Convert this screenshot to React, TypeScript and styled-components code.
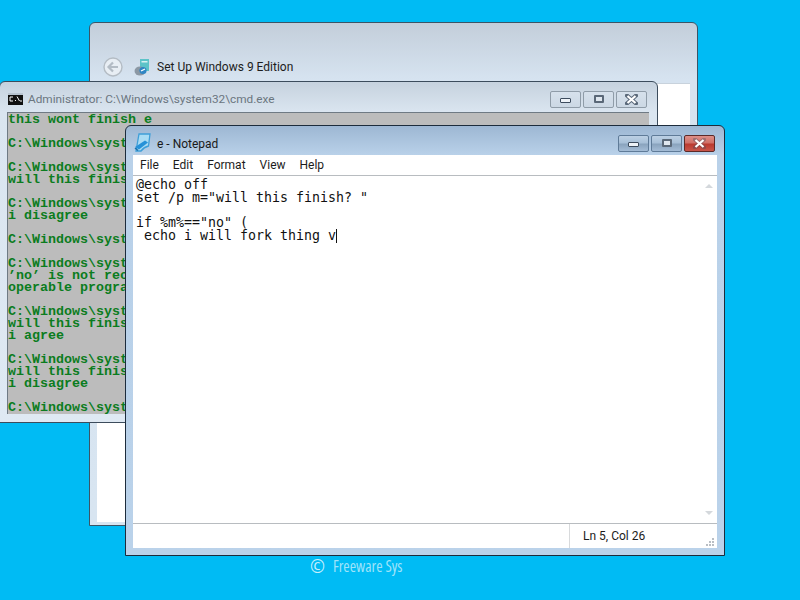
import styled, { createGlobalStyle } from "styled-components";

const GlobalStyle = createGlobalStyle`
  html, body {
    margin: 0;
    padding: 0;
    background: #00bbf4;
  }
  * {
    box-sizing: border-box;
  }
`;

const consoleText = [
  "this wont finish e",
  "",
  "C:\\Windows\\system32>e",
  "",
  "C:\\Windows\\system32>e",
  "will this finish? i",
  "",
  "C:\\Windows\\system32>",
  "i disagree",
  "",
  "C:\\Windows\\system32>",
  "",
  "C:\\Windows\\system32>no",
  "’no’ is not recognized",
  "operable program or",
  "",
  "C:\\Windows\\system32>e",
  "will this finish? i",
  "i agree",
  "",
  "C:\\Windows\\system32>e",
  "will this finish? i",
  "i disagree",
  "",
  "C:\\Windows\\system32>",
];

function WindowButtons({ active }: { active?: boolean }) {
  return (
    <ButtonGroup>
      <CaptionButton $active={active}>
        <MinGlyph />
      </CaptionButton>
      <CaptionButton $active={active}>
        <MaxGlyph />
      </CaptionButton>
      <CaptionButton $active={active} $close>
        <svg width="13" height="11" viewBox="0 0 13 11">
          <path
            d="M2 1.5 L11 9.5 M11 1.5 L2 9.5"
            stroke="#3d4c5e"
            strokeWidth="4"
            strokeLinecap="square"
            opacity={active ? 0.35 : 0.8}
          />
          <path
            d="M2.5 2 L10.5 9 M10.5 2 L2.5 9"
            stroke="#fff"
            strokeWidth="2.2"
          />
        </svg>
      </CaptionButton>
    </ButtonGroup>
  );
}

function BackIcon() {
  return (
    <svg width="20" height="20" viewBox="0 0 20 20">
      <circle cx="10" cy="10" r="9" fill="#e8eef4" stroke="#b4bcc4" strokeWidth="1.4" />
      <path
        d="M10 5.5 L5.5 10 L10 14.5 M5.5 10 H15"
        fill="none"
        stroke="#b3bcc5"
        strokeWidth="2.2"
      />
    </svg>
  );
}

function SetupIcon() {
  return (
    <svg width="16" height="18" viewBox="0 0 16 18">
      <rect x="6" y="1" width="9" height="12" fill="#5cc3c8" />
      <rect x="7.5" y="3" width="6" height="1.5" fill="#d8f2f2" />
      <ellipse cx="6" cy="13" rx="5.5" ry="4.5" fill="#8c98a4" />
      <circle cx="9" cy="12.5" r="3.6" fill="#2f86c4" />
      <path d="M7 13 L11 11" stroke="#fff" strokeWidth="1.3" />
    </svg>
  );
}

function CmdIcon() {
  return (
    <svg width="15" height="12" viewBox="0 0 15 12">
      <rect width="15" height="12" fill="#111" />
      <rect y="0" width="15" height="2" fill="#b8c4d0" />
      <path d="M2 4 H5 M2 4 V8 M2 8 H5" stroke="#fff" strokeWidth="1" fill="none" />
      <path d="M7 7.5 H8 M9 3.5 L11.5 8 M12 8 H14" stroke="#fff" strokeWidth="1" fill="none" />
    </svg>
  );
}

function NotepadIcon() {
  return (
    <svg width="18" height="20" viewBox="0 0 18 20">
      <path d="M5 1 H16 L14.5 13 Q10 14 7 18 H2 Z" fill="#a9dcf4" stroke="#3f9fd8" strokeWidth="1.3" />
      <path d="M1 14 L11 7.5 L14 9.5 L5 16.5 Z" fill="#2792d8" />
      <path d="M1 15 L4 17.5" stroke="#1b6fa8" strokeWidth="1.4" />
    </svg>
  );
}

export default function App() {
  return (
    <>
      <GlobalStyle />
      <Desktop>
        <SetupWindow>
          <SetupHeader>
            <BackIcon />
            <SetupIconWrap>
              <SetupIcon />
            </SetupIconWrap>
            <SetupTitle>Set Up Windows 9 Edition</SetupTitle>
          </SetupHeader>
          <SetupBody />
        </SetupWindow>

        <CmdWindow>
          <CmdBar>
            <CmdIconWrap>
              <CmdIcon />
            </CmdIconWrap>
            <CmdTitle>Administrator: C:\Windows\system32\cmd.exe</CmdTitle>
            <WindowButtons />
          </CmdBar>
          <ConsoleArea>
            {consoleText.map((line, i) => (
              <ConsoleLine key={i}>{line || " "}</ConsoleLine>
            ))}
          </ConsoleArea>
        </CmdWindow>

        <NotepadWindow>
          <NotepadBar>
            <NotepadIconWrap>
              <NotepadIcon />
            </NotepadIconWrap>
            <NotepadTitle>e - Notepad</NotepadTitle>
            <WindowButtons active />
          </NotepadBar>
          <Client>
            <MenuBar>
              <MenuItem>File</MenuItem>
              <MenuItem>Edit</MenuItem>
              <MenuItem>Format</MenuItem>
              <MenuItem>View</MenuItem>
              <MenuItem>Help</MenuItem>
            </MenuBar>
            <EditorArea>
              <EditorText>
                <EditorLine>@echo off</EditorLine>
                <EditorLine>set /p m="will this finish? "</EditorLine>
                <EditorLine> </EditorLine>
                <EditorLine>if %m%=="no" (</EditorLine>
                <EditorLine>
                  {" echo i will fork thing v"}
                  <Caret />
                </EditorLine>
              </EditorText>
              <Scrollbar>
                <ArrowUp />
                <ArrowDown />
              </Scrollbar>
            </EditorArea>
            <StatusBar>
              <StatusSpacer />
              <StatusCell>Ln 5, Col 26</StatusCell>
              <Grip>
                <svg width="12" height="12" viewBox="0 0 12 12">
                  <path
                    d="M9 2h2v2H9z M6 5h2v2H6z M9 5h2v2H9z M3 8h2v2H3z M6 8h2v2H6z M9 8h2v2H9z"
                    fill="#b9bec4"
                  />
                </svg>
              </Grip>
            </StatusBar>
          </Client>
        </NotepadWindow>

        <Watermark>
          <CopyMark>©</CopyMark>
          <span>Freeware Sys</span>
        </Watermark>
      </Desktop>
    </>
  );
}

const Desktop = styled.div`
  position: relative;
  width: 800px;
  height: 600px;
  overflow: hidden;
  background: #00bbf4;
  font-family: Roboto, "Liberation Sans", sans-serif;
`;

const SetupWindow = styled.div`
  position: absolute;
  left: 89px;
  top: 22px;
  width: 609px;
  height: 504px;
  display: flex;
  flex-direction: column;
  border: 1px solid #3c5566;
  border-radius: 6px 6px 0 0;
  padding: 0 7px 3px 7px;
  background: linear-gradient(#c3ceda 0, #d6e3f0 56px, #d8e5f1 100%);
`;

const SetupHeader = styled.div`
  height: 60px;
  flex: none;
  display: flex;
  align-items: center;
  padding: 35px 0 7px 6px;
`;

const SetupIconWrap = styled.div`
  display: flex;
  margin-left: 11px;
`;

const SetupTitle = styled.div`
  margin-left: 7px;
  font-size: 12px;
  color: #1c1c1c;
  white-space: nowrap;
`;

const SetupBody = styled.div`
  flex: 1;
  background: #ffffff;
  border-top: 1px solid #c8d2dc;
`;

const CmdBar = styled.div`
  height: 30px;
  flex: none;
  display: flex;
  align-items: center;
  padding-top: 4px;
`;

const NotepadBar = styled.div`
  height: 29px;
  flex: none;
  display: flex;
  align-items: center;
  padding-top: 5px;
`;

const CmdWindow = styled.div`
  position: absolute;
  left: -1px;
  top: 81px;
  width: 659px;
  height: 342px;
  display: flex;
  flex-direction: column;
  border: 1px solid #3c4c5c;
  border-radius: 6px 6px 0 0;
  padding: 0 8px 8px 7px;
  background: linear-gradient(#c6d2de 0, #dae5f0 30px, #dfe9f3 100%);
`;

const CmdIconWrap = styled.div`
  display: flex;
  margin-right: 5px;
  margin-left: 1px;
`;

const CmdTitle = styled.div`
  flex: 1;
  font-size: 11.8px;
  color: #6b7680;
  white-space: nowrap;
`;

const ConsoleArea = styled.div`
  flex: 1;
  overflow: hidden;
  background: #bcbcbc;
  border-top: 1px solid #6f7a84;
  border-left: 1px solid #6f7a84;
  padding-top: 1px;
`;

const ConsoleLine = styled.div`
  height: 12px;
  line-height: 12px;
  font-family: "Liberation Mono", "DejaVu Sans Mono", monospace;
  font-size: 13.33px;
  font-weight: 700;
  color: #0b7c20;
  white-space: pre;
`;

const NotepadWindow = styled.div`
  position: absolute;
  left: 125px;
  top: 125px;
  width: 600px;
  height: 431px;
  display: flex;
  flex-direction: column;
  border: 1px solid #1d2c3c;
  border-radius: 6px 6px 0 0;
  padding: 0 7px 7px 7px;
  background: linear-gradient(#9db7d3 0, #b9d1e9 29px, #bad2ea 100%);
`;

const NotepadIconWrap = styled.div`
  display: flex;
  margin-left: 1px;
  margin-right: 5px;
`;

const NotepadTitle = styled.div`
  flex: 1;
  font-size: 12px;
  line-height: 16px;
  padding-top: 1px;
  color: #1a1a1a;
  white-space: nowrap;
`;

const ButtonGroup = styled.div`
  display: flex;
  gap: 2px;
  margin-right: 2px;
`;

const CaptionButton = styled.div<{ $active?: boolean; $close?: boolean }>`
  width: 31px;
  height: 17px;
  display: flex;
  align-items: center;
  justify-content: center;
  border: 1px solid
    ${(p) =>
      p.$active ? (p.$close ? "#5c2a28" : "#5f7b98") : "#8f9ca8"};
  border-radius: 2px;
  background: ${(p) =>
    !p.$active
      ? "linear-gradient(#d6e1ec, #ccd8e4)"
      : p.$close
        ? "linear-gradient(#dd8f88 0, #d07068 45%, #bb3a30 55%, #c8554a 100%)"
        : "linear-gradient(#bcd0e4 0, #a8c0d8 45%, #8aa4be 55%, #a4bcd6 100%)"};
`;

const MinGlyph = styled.div`
  width: 11px;
  height: 5px;
  margin-top: 3px;
  background: #eef3f8;
  border: 1px solid #3d4c5e;
  border-radius: 1px;
`;

const MaxGlyph = styled.div`
  width: 10px;
  height: 8px;
  background: #dfe7ef;
  border: 2px solid #5a6878;
  border-radius: 1px;
`;

const Client = styled.div`
  flex: 1;
  min-height: 0;
  display: flex;
  flex-direction: column;
  background: #ffffff;
`;

const MenuBar = styled.div`
  height: 21px;
  flex: none;
  display: flex;
  align-items: center;
  gap: 14px;
  padding-left: 7px;
  border-bottom: 1px solid #b8bcc0;
  font-size: 12px;
  color: #1c1c1c;
`;

const MenuItem = styled.span`
  display: block;
`;

const EditorArea = styled.div`
  flex: 1;
  min-height: 0;
  display: flex;
  border-bottom: 1px solid #b8bcc0;
`;

const EditorText = styled.div`
  flex: 1;
  padding: 2px 0 0 3px;
`;

const EditorLine = styled.div`
  height: 12.75px;
  line-height: 13px;
  font-family: "DejaVu Sans Mono", "Liberation Mono", monospace;
  font-size: 13.29px;
  color: #111111;
  white-space: pre;
`;

const Caret = styled.span`
  display: inline-block;
  width: 1px;
  height: 14px;
  background: #111111;
  vertical-align: -3px;
`;

const Scrollbar = styled.div`
  width: 17px;
  flex: none;
  display: flex;
  flex-direction: column;
  justify-content: space-between;
  align-items: center;
  padding: 8px 0 8px;
`;

const ArrowUp = styled.div`
  width: 0;
  height: 0;
  border-left: 4px solid transparent;
  border-right: 4px solid transparent;
  border-bottom: 4px solid #d4d8dc;
`;

const ArrowDown = styled.div`
  width: 0;
  height: 0;
  border-left: 4px solid transparent;
  border-right: 4px solid transparent;
  border-top: 4px solid #d4d8dc;
`;

const StatusBar = styled.div`
  height: 24px;
  flex: none;
  display: flex;
  align-items: center;
  font-size: 12px;
  color: #1c1c1c;
`;

const StatusSpacer = styled.div`
  width: 437px;
  flex: none;
  height: 100%;
  border-right: 1px solid #d8dadc;
`;

const StatusCell = styled.div`
  flex: 1;
  padding-left: 13px;
`;

const Grip = styled.div`
  display: flex;
  align-self: flex-end;
  width: 14px;
`;

const Watermark = styled.div`
  position: absolute;
  left: 310px;
  top: 554px;
  display: flex;
  align-items: center;
  gap: 8px;
  font-family: "Open Sans", sans-serif;
  font-size: 15.4px;
  color: #9fe3fa;
  font-stretch: condensed;
`;

const CopyMark = styled.span`
  font-size: 18px;
  color: #c8effc;
`;
